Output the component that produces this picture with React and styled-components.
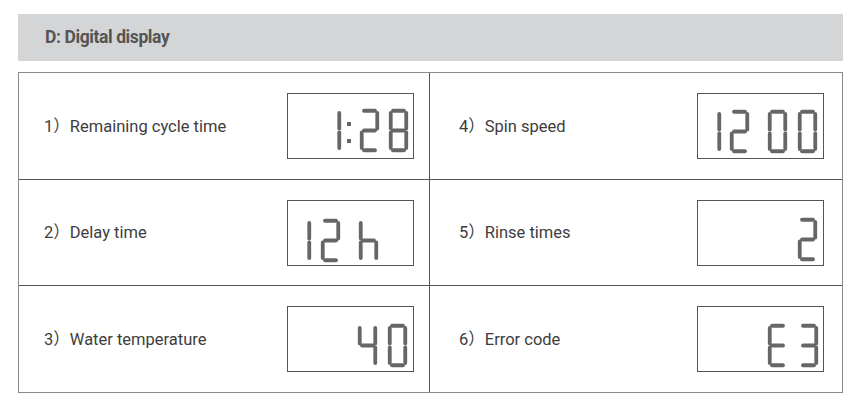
import styled, { createGlobalStyle } from "styled-components";

const GlobalStyle = createGlobalStyle`
  body {
    margin: 0;
    background: #fff;
    font-family: Roboto, "Noto Sans CJK SC", sans-serif;
  }
`;

// segments in a 19x43 digit cell
const SEG = {
  a: [4, 1.75, 15, 1.75],
  b: [17.25, 4, 17.25, 19.5],
  c: [17.25, 23.5, 17.25, 39],
  d: [4, 41.25, 15, 41.25],
  e: [1.75, 23.5, 1.75, 39],
  f: [1.75, 4, 1.75, 19.5],
  g: [4, 21.5, 15, 21.5],
};

const GLYPHS = {
  0: "abcdef",
  1: "bc",
  2: "abged",
  3: "abgcd",
  4: "fbgc",
  8: "abcdefg",
  E: "afged",
  h: "fegc",
};

const Digit = ({ ch, x, y }) => (
  <g transform={`translate(${x} ${y})`}>
    {GLYPHS[ch].split("").map((s) => {
      const [x1, y1, x2, y2] = SEG[s];
      return <line key={s} x1={x1} y1={y1} x2={x2} y2={y2} />;
    })}
  </g>
);

const rows = [
  [
    {
      label: "1）Remaining cycle time",
      y: 16,
      chars: [
        { ch: "1", x: 35 },
        { colon: true, x: 60 },
        { ch: "2", x: 73 },
        { ch: "8", x: 102 },
      ],
    },
    {
      label: "4）Spin speed",
      y: 17,
      chars: [
        { ch: "1", x: 5 },
        { ch: "2", x: 33 },
        { ch: "0", x: 71 },
        { ch: "0", x: 101 },
      ],
    },
  ],
  [
    {
      label: "2）Delay time",
      y: 19,
      chars: [
        { ch: "1", x: 5 },
        { ch: "2", x: 34 },
        { ch: "h", x: 72 },
      ],
    },
    {
      label: "5）Rinse times",
      y: 18,
      chars: [{ ch: "2", x: 101 }],
    },
  ],
  [
    {
      label: "3）Water temperature",
      y: 18,
      chars: [
        { ch: "4", x: 71 },
        { ch: "0", x: 101 },
      ],
    },
    {
      label: "6）Error code",
      y: 18,
      chars: [
        { ch: "E", x: 71 },
        { ch: "3", x: 102 },
      ],
    },
  ],
];

const Lcd = ({ chars, y }) => (
  <Screen>
    <svg width="125" height="64" viewBox="1 1 125 64">
      <g stroke="#666" strokeWidth="3.8" strokeLinecap="round">
        {chars.map((c, i) =>
          c.colon ? (
            <g key={i} fill="#666" stroke="none">
              <rect x={c.x} y={y + 13} width="4" height="4" />
              <rect x={c.x} y={y + 30} width="4" height="4" />
            </g>
          ) : (
            <Digit key={i} ch={c.ch} x={c.x} y={y} />
          )
        )}
      </g>
    </svg>
  </Screen>
);

export default function App() {
  return (
    <>
      <GlobalStyle />
      <Page>
        <Header>
          <Title>D: Digital display</Title>
        </Header>
        <Table>
          {rows.map((row, r) =>
            row.map((cell, c) => (
              <Cell key={`${r}-${c}`} $right={c === 1} $last={r === 2}>
                <Label>{cell.label}</Label>
                <Lcd chars={cell.chars} y={cell.y} />
              </Cell>
            ))
          )}
        </Table>
      </Page>
    </>
  );
}

const Page = styled.div`
  width: 825px;
  margin: 14px 0 0 18px;
`;

const Header = styled.div`
  height: 47px;
  background: #d4d5d7;
  display: flex;
  align-items: center;
  padding-left: 27px;
`;

const Title = styled.div`
  font-size: 17.5px;
  font-weight: 700;
  color: #555;
  letter-spacing: -0.4px;
  margin-top: -1px;
`;

const Table = styled.div`
  margin-top: 11px;
  height: 321px;
  box-sizing: border-box;
  border: 1px solid #8a8a8a;
  display: grid;
  grid-template-columns: 411px 1fr;
  grid-template-rows: 107px 106px 1fr;
`;

const Cell = styled.div`
  display: flex;
  align-items: center;
  justify-content: space-between;
  padding: 0 ${(p) => (p.$right ? "18px" : "15px")} 0
    ${(p) => (p.$right ? "29px" : "25px")};
  border-right: ${(p) => (p.$right ? "none" : "1px solid #555")};
  border-bottom: ${(p) => (p.$last ? "none" : "1px solid #555")};
`;

const Label = styled.div`
  font-size: 16.5px;
  color: #3d3d3d;
  margin-top: -3px;
`;

const Screen = styled.div`
  width: 127px;
  height: 66px;
  box-sizing: border-box;
  border: 1px solid #555;

  svg {
    display: block;
  }
`;
